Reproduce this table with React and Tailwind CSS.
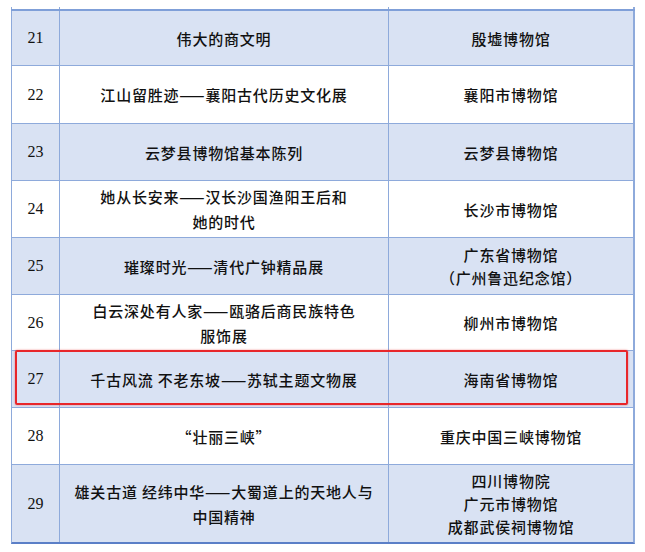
import React from 'react';

const rows = [
  { no: '21', title: ['伟大的商文明'], museum: ['殷墟博物馆'], h: 'h-[55px]', blue: true },
  { no: '22', title: ['江山留胜迹——襄阳古代历史文化展'], museum: ['襄阳市博物馆'], h: 'h-[58px]' },
  { no: '23', title: ['云梦县博物馆基本陈列'], museum: ['云梦县博物馆'], h: 'h-[57px]', blue: true },
  { no: '24', title: ['她从长安来——汉长沙国渔阳王后和', '她的时代'], museum: ['长沙市博物馆'], h: 'h-[57px]' },
  { no: '25', title: ['璀璨时光——清代广钟精品展'], museum: ['广东省博物馆', '（广州鲁迅纪念馆）'], h: 'h-[57px]', blue: true },
  { no: '26', title: ['白云深处有人家——瓯骆后商民族特色', '服饰展'], museum: ['柳州市博物馆'], h: 'h-[56px]' },
  { no: '27', title: ['千古风流 不老东坡——苏轼主题文物展'], museum: ['海南省博物馆'], h: 'h-[57px]', blue: true, marked: true },
  { no: '28', title: ['“壮丽三峡”'], museum: ['重庆中国三峡博物馆'], h: 'h-[57px]' },
  { no: '29', title: ['雄关古道 经纬中华——大蜀道上的天地人与', '中国精神'], museum: ['四川博物院', '广元市博物馆', '成都武侯祠博物馆'], h: 'h-[79px]', blue: true, last: true },
];

const cjk = { fontFamily: '"Noto Sans CJK SC", "Liberation Serif", sans-serif' };

export default function App() {
  return (
    <div className="w-[645px] h-[552px] bg-white pt-[7px] pl-[11px] text-[#111]">
      <div className="w-[624px]">
        {/* stub of the row cut off above */}
        <div className="flex h-[2px] border-l border-r-2 border-[#8eaadb]">
          <div className="w-[48px] border-r border-[#8eaadb]" />
          <div className="w-[329px] border-r border-[#8eaadb]" />
        </div>
        <div className="h-[2px] bg-[#7f9fd8]" />

        {rows.map((r) => (
          <div
            key={r.no}
            className={`relative flex ${r.h} border-l border-r-2 border-[#8eaadb] ${
              r.last ? 'border-b-2 border-b-[#5b7fc7]' : 'border-b border-b-[#8eaadb]'
            } ${r.blue ? 'bg-[#d9e2f3]' : 'bg-white'}`}
          >
            <div
              className="w-[48px] shrink-0 flex items-center justify-center border-r border-[#8eaadb] text-[16px]"
              style={{ fontFamily: '"Liberation Serif", serif' }}
            >
              {r.no}
            </div>
            <div
              className="w-[329px] shrink-0 flex flex-col items-center justify-center border-r border-[#8eaadb] text-[15px] font-medium leading-[25px] tracking-[0.8px] whitespace-nowrap"
              style={cjk}
            >
              {r.title.map((t) => <div key={t}>{t}</div>)}
            </div>
            <div
              className="flex-1 flex flex-col items-center justify-center text-[15px] font-medium leading-[23px] tracking-[0.8px] whitespace-nowrap"
              style={cjk}
            >
              {r.museum.map((t) => <div key={t}>{t}</div>)}
            </div>

            {r.marked && (
              <div className="absolute left-[3px] right-[5px] top-[-1px] bottom-[2px] border-2 border-[#e8262a] rounded-[2px] shadow-[0_0_2px_rgba(232,38,42,0.6)] pointer-events-none" />
            )}
          </div>
        ))}
      </div>
    </div>
  );
}
